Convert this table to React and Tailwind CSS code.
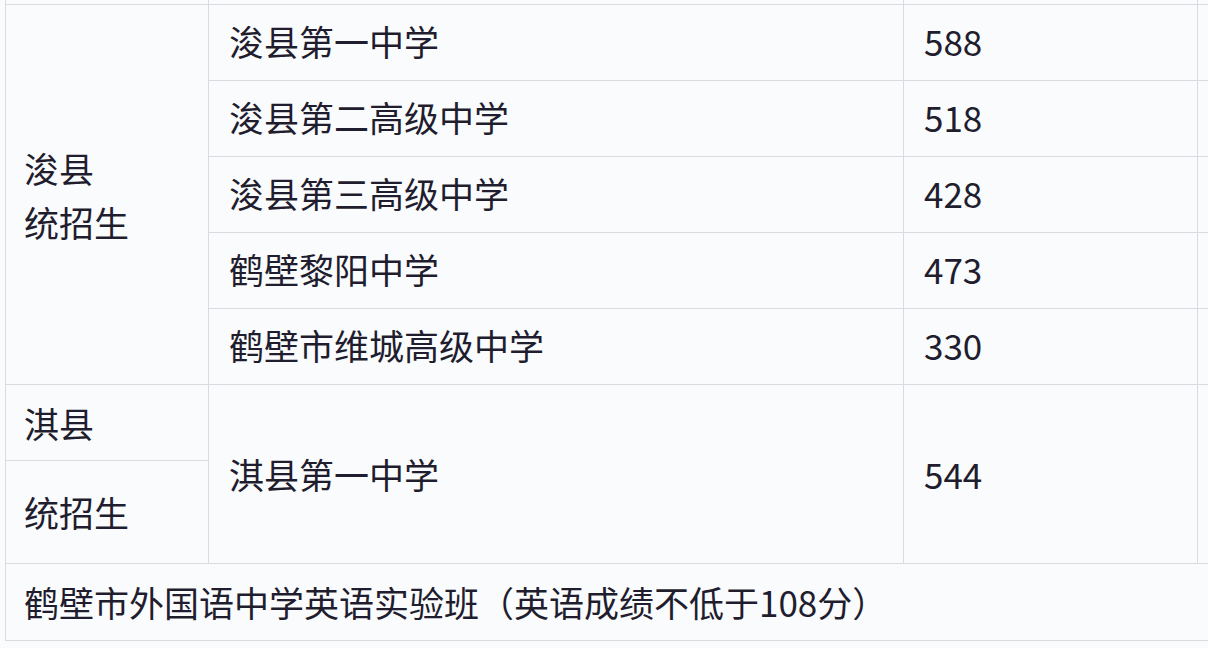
export default function App() {
  const schools = [
    { name: "浚县第一中学", score: "588" },
    { name: "浚县第二高级中学", score: "518" },
    { name: "浚县第三高级中学", score: "428" },
    { name: "鹤壁黎阳中学", score: "473" },
    { name: "鹤壁市维城高级中学", score: "330" },
  ];

  const cell = "border border-[#d9dbe0] px-0 align-middle";

  return (
    <div
      className="w-[1208px] h-[648px] overflow-hidden bg-[#fafbfd] text-[#1f1d2e]"
      style={{ fontFamily: '"Noto Sans CJK SC", "Noto Sans", sans-serif' }}
    >
      <table className="ml-[5px] -mt-[1px] border-collapse table-fixed w-[1300px] text-[35px] leading-[54px]">
        <colgroup>
          <col className="w-[203px]" />
          <col className="w-[695px]" />
          <col className="w-[294px]" />
          <col className="w-[108px]" />
        </colgroup>
        <tbody>
          <tr className="h-[5px]">
            <td className={cell}></td>
            <td className={cell}></td>
            <td className={cell}></td>
            <td className={cell}></td>
          </tr>
          {schools.map((s, i) => (
            <tr key={s.name} className="h-[76px]">
              {i === 0 && (
                <td rowSpan={5} className={`${cell} pl-[18px]`}>
                  浚县
                  <br />
                  统招生
                </td>
              )}
              <td className={`${cell} pl-[20px] pb-[3px]`}>{s.name}</td>
              <td className={`${cell} pl-[20px] pb-[3px]`}>{s.score}</td>
              <td className={cell}></td>
            </tr>
          ))}
          <tr className="h-[76px]">
            <td className={`${cell} pl-[18px]`}>淇县</td>
            <td rowSpan={2} className={`${cell} pl-[20px]`}>
              淇县第一中学
            </td>
            <td rowSpan={2} className={`${cell} pl-[20px]`}>
              544
            </td>
            <td rowSpan={2} className={cell}></td>
          </tr>
          <tr className="h-[103px]">
            <td className={`${cell} pl-[18px]`}>统招生</td>
          </tr>
          <tr className="h-[77px]">
            <td colSpan={4} className={`${cell} pl-[18px]`}>
              鹤壁市外国语中学英语实验班（英语成绩不低于108分）
            </td>
          </tr>
        </tbody>
      </table>
    </div>
  );
}
